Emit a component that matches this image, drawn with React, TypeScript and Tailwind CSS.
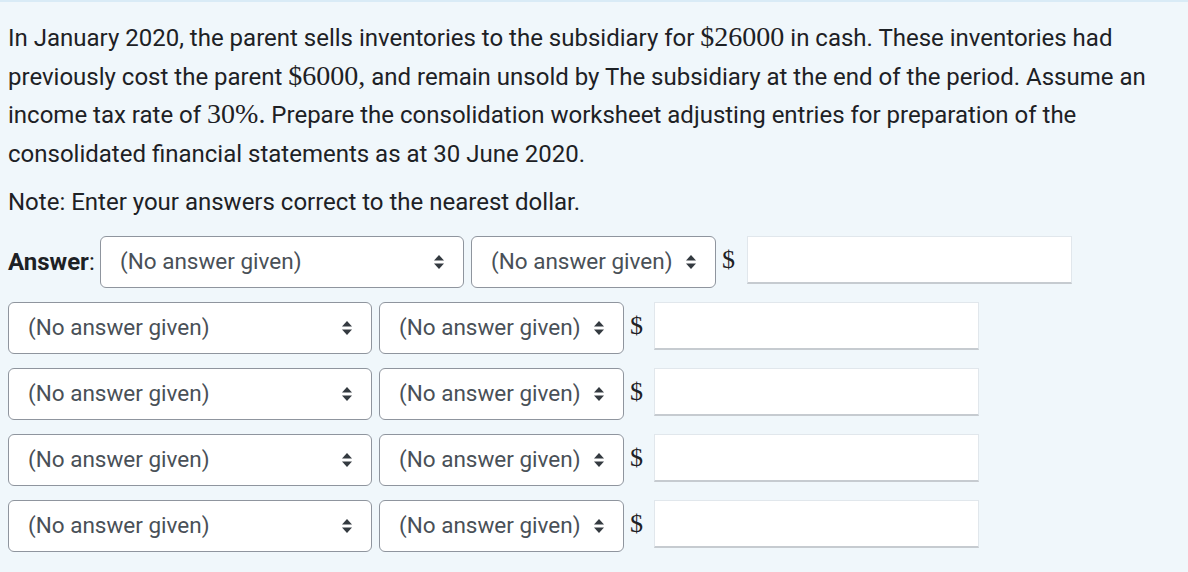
import React from "react";

function Arrows() {
  return (
    <svg width="10" height="14" viewBox="0 0 10 14" className="shrink-0">
      <path d="M5 0 L10 5.5 L0 5.5 Z" fill="#343a40" />
      <path d="M0 8.5 L10 8.5 L5 14 Z" fill="#343a40" />
    </svg>
  );
}

function Select({ width }: { width: string }) {
  return (
    <div
      className={`${width} h-[52px] shrink-0 flex items-center justify-between pl-[19px] pr-[19px] bg-white border border-[#8f959e] rounded-[6px] text-[22.5px] text-[#495057]`}
    >
      <span>(No answer given)</span>
      <Arrows />
    </div>
  );
}

function Dollar() {
  return (
    <span className="font-['Liberation_Serif',serif] text-[26px] leading-none text-[#1d2125]">
      $
    </span>
  );
}

function AmountInput() {
  return (
    <div className="w-[325px] h-[48px] shrink-0 bg-white border border-[#e1e7ec] border-b-2 border-b-[#c6cbd0]" />
  );
}

function M({ children }: { children: React.ReactNode }) {
  return (
    <span className="font-['Liberation_Serif',serif] text-[28px] leading-none">{children}</span>
  );
}

export default function App() {
  const rows = [0, 1, 2, 3];

  return (
    <div className="min-h-screen bg-[#f0f7fb] border-t-2 border-[#d9ebf6] font-['Roboto',sans-serif] text-[24px] text-[#1d2125]">
      <div className="pl-2 pr-4 pt-[17px]">
        <p className="leading-[38.7px] max-w-[1160px]">
          In January 2020, the parent sells inventories to the subsidiary for <M>$26000</M> in cash. These
          inventories had previously cost the parent <M>$6000,</M> and remain unsold by The subsidiary at the
          end of the period. Assume an income tax rate of <M>30%.</M> Prepare the consolidation worksheet
          adjusting entries for preparation of the consolidated financial statements as at 30 June 2020.
        </p>
        <p className="mt-[9px] leading-[38.7px]">Note: Enter your answers correct to the nearest dollar.</p>

        <div className="mt-[14px] flex items-center">
          <span className="w-[92px] shrink-0">
            <b className="font-bold">Answer</b>:
          </span>
          <Select width="w-[364px]" />
          <div className="ml-[7px]">
            <Select width="w-[245px]" />
          </div>
          <div className="ml-[6px] mr-[12px] -mt-[4px]">
            <Dollar />
          </div>
          <div className="-mt-[4px]">
            <AmountInput />
          </div>
        </div>

        <div className="mt-[14px] flex flex-col gap-[14px]">
          {rows.map((r) => (
            <div key={r} className="flex items-center">
              <Select width="w-[364px]" />
              <div className="ml-[7px]">
                <Select width="w-[245px]" />
              </div>
              <div className="ml-[6px] mr-[11px] -mt-[4px]">
                <Dollar />
              </div>
              <div className="-mt-[4px]">
                <AmountInput />
              </div>
            </div>
          ))}
        </div>
      </div>
    </div>
  );
}
